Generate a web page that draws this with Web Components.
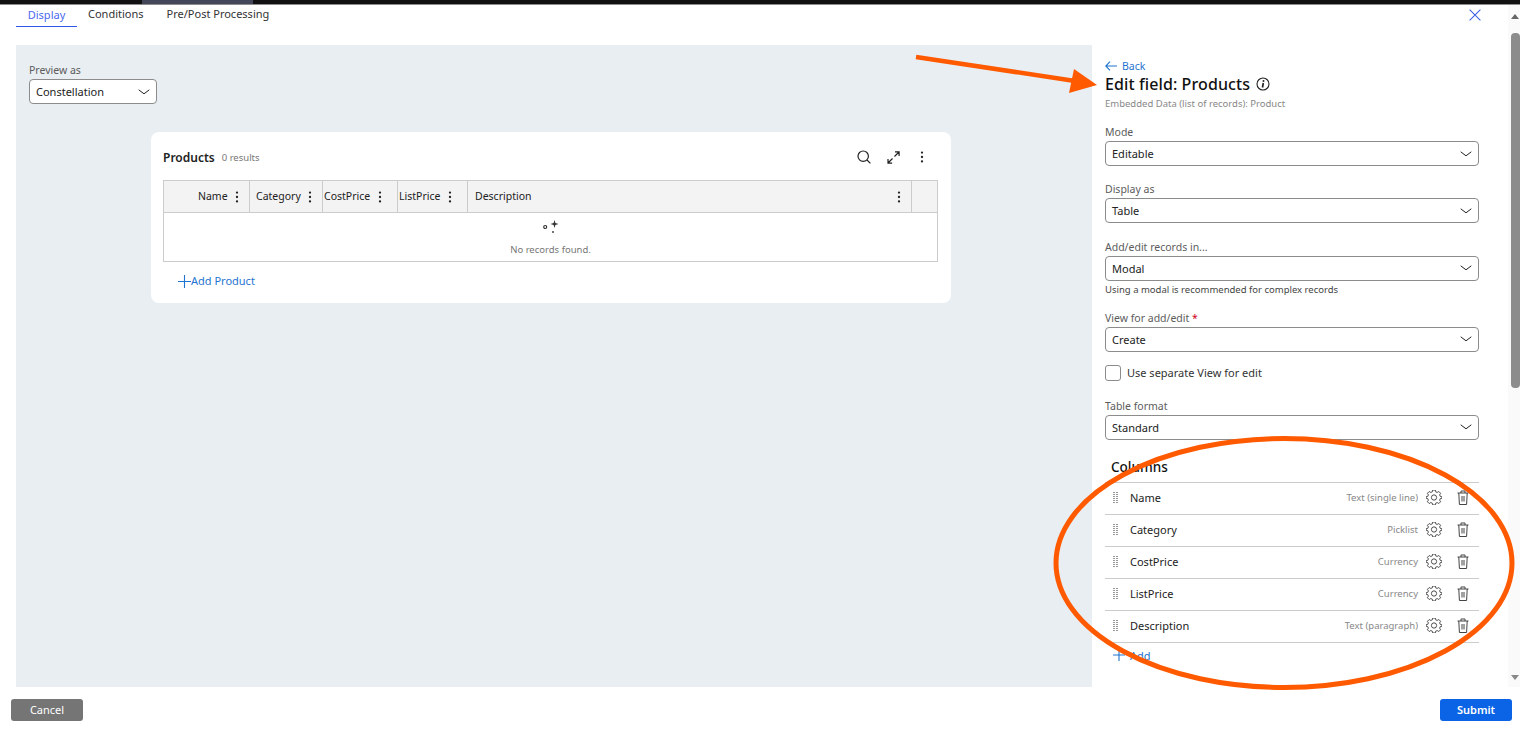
<!DOCTYPE html>
<html>
<head>
<meta charset="utf-8">
<title>Edit field</title>
<style>
    html, body { margin: 0; padding: 0; height: 100%; overflow: hidden; background: #fff; }
    body { font-family: "Noto Sans", "Open Sans", sans-serif; font-size: 11px; color: #222; }
</style>
</head>
<body>
<app-shell>
    <tab-bar slot="tabs"></tab-bar>
    <preview-area slot="preview"></preview-area>
    <field-panel slot="panel"></field-panel>
    <form-footer slot="footer"></form-footer>
    <annotation-layer slot="overlay"></annotation-layer>
</app-shell>

<script>
const DOTS = `<svg width="4" height="12" viewBox="0 0 4 12"><circle cx="2" cy="1.6" r="1.15" fill="#222"/><circle cx="2" cy="6" r="1.15" fill="#222"/><circle cx="2" cy="10.4" r="1.15" fill="#222"/></svg>`;
const CHEVRON = `<svg width="12" height="6" viewBox="0 0 12 6"><path d="M.7.8 6 4.8 11.3.8" fill="none" stroke="#222" stroke-width="1"/></svg>`;

class AppShell extends HTMLElement {
    constructor() {
        super();
        this.attachShadow({ mode: "open" });
    }

    connectedCallback() {
        this.shadowRoot.innerHTML = `
            <style>
                :host { display: flex; flex-direction: column; width: 1520px; height: 731px; position: relative; overflow: hidden; }
                .strip { height: 4px; background: #111; border-bottom: 1px solid #8d8d8d; padding-left: 142px; flex: none; }
                .strip div { width: 111px; height: 4px; background: #44465a; }
                .content { display: flex; height: 642px; padding-left: 16px; flex: none; }
            </style>
            <div class="strip"><div></div></div>
            <slot name="tabs"></slot>
            <div class="content">
                <slot name="preview"></slot>
                <slot name="panel"></slot>
                <scroll-bar></scroll-bar>
            </div>
            <slot name="footer"></slot>
            <slot name="overlay"></slot>
        `;
    }
}

class TabBar extends HTMLElement {
    constructor() {
        super();
        this.attachShadow({ mode: "open" });
    }

    connectedCallback() {
        this.shadowRoot.innerHTML = `
            <style>
                :host { display: flex; height: 40px; padding-left: 16px; flex: none; box-sizing: border-box; position: relative; }
                .tab { height: 22px; line-height: 18px; font-size: 11px; color: #333; margin-right: 23px; }
                .tab.on { width: 61px; box-sizing: border-box; text-align: center; color: #4a69ef; border-bottom: 1px solid #2f55ea; line-height: 20px; margin-right: 11px; }
                .close { position: absolute; left: 1469px; top: 4px; }
            </style>
            <div class="tab on">Display</div>
            <div class="tab">Conditions</div>
            <div class="tab">Pre/Post Processing</div>
            <svg class="close" width="12" height="12" viewBox="0 0 12 12"><path d="M.6.6 11.4 11.4M11.4.6.6 11.4" stroke="#3f62e6" stroke-width="1.1" fill="none"/></svg>
        `;
    }
}

class SelectBox extends HTMLElement {
    constructor() {
        super();
        this.attachShadow({ mode: "open" });
    }

    connectedCallback() {
        this.shadowRoot.innerHTML = `
            <style>
                :host { display: flex; align-items: center; justify-content: space-between; box-sizing: border-box; height: 25px; padding: 0 6px; background: #fff; border: 1px solid #8c8c8c; border-radius: 4px; color: #222; font-size: 11px; }
            </style>
            <span>${this.getAttribute("value")}</span>
            ${CHEVRON}
        `;
    }
}

class PreviewArea extends HTMLElement {
    constructor() {
        super();
        this.attachShadow({ mode: "open" });
    }

    connectedCallback() {
        this.shadowRoot.innerHTML = `
            <style>
                :host { display: block; box-sizing: border-box; width: 1076px; height: 642px; background: #e9eef2; padding: 18px 13px; flex: none; }
                label { display: block; height: 16px; line-height: 15px; color: #5c5c5c; font-size: 10.5px; }
                select-box { width: 128px; }
                products-card { margin: 28px 0 0 122px; }
            </style>
            <label>Preview as</label>
            <select-box value="Constellation"></select-box>
            <products-card></products-card>
        `;
    }
}

class ProductsCard extends HTMLElement {
    constructor() {
        super();
        this.attachShadow({ mode: "open" });
    }

    connectedCallback() {
        this.shadowRoot.innerHTML = `
            <style>
                :host { display: block; box-sizing: border-box; width: 800px; height: 171px; background: #fff; border-radius: 8px; padding: 0 13px 0 12px; }
                .head { display: flex; align-items: center; box-sizing: border-box; height: 48px; padding-top: 2px; }
                .title { font-weight: 600; font-size: 12px; color: #222; }
                .count { font-size: 9.5px; color: #777; margin-left: 7px; }
                .tools { margin-left: auto; display: flex; align-items: center; margin-right: 14px; }
                .tools svg { display: block; }
                .add { display: flex; align-items: center; margin: 11px 0 0 15px; color: #1f74cf; font-size: 11px; line-height: 16px; }
            </style>
            <div class="head">
                <span class="title">Products</span>
                <span class="count">0 results</span>
                <div class="tools">
                    <svg width="14" height="14" viewBox="0 0 14 14" style="margin-right:16px"><circle cx="6.2" cy="6.2" r="5.2" fill="none" stroke="#222" stroke-width="1.2"/><path d="M10 10 13.4 13.4" stroke="#222" stroke-width="1.2"/></svg>
                    <svg width="13" height="13" viewBox="0 0 13 13" style="margin-right:20px"><path d="M7.5 5.5 12 1M8 .9h4.1V5M5.5 7.5 1 12M1 8v4.1h4.1" fill="none" stroke="#222" stroke-width="1.2"/></svg>
                    ${DOTS}
                </div>
            </div>
            <records-table></records-table>
            <div class="add">
                <svg width="13" height="13" viewBox="0 0 13 13"><path d="M6.5 0v13M0 6.5h13" stroke="#1f74cf" stroke-width="1.1"/></svg>
                <span>Add Product</span>
            </div>
        `;
    }
}

class RecordsTable extends HTMLElement {
    constructor() {
        super();
        this.attachShadow({ mode: "open" });
    }

    connectedCallback() {
        this.shadowRoot.innerHTML = `
            <style>
                :host { display: block; box-sizing: border-box; height: 82px; border: 1px solid #ccc; }
                .header { display: flex; height: 32px; box-sizing: border-box; background: #f3f3f3; border-bottom: 1px solid #ccc; font-size: 10.5px; color: #222; }
                .cell { display: flex; align-items: center; box-sizing: border-box; border-right: 1px solid #ccc; flex: none; padding-bottom: 2px; }
                .cell svg { flex: none; margin-top: 2px; }
                .body { display: flex; flex-direction: column; align-items: center; }
                .body svg { margin-top: 6px; }
                .empty { font-size: 9.5px; color: #777; margin-top: 8px; line-height: 13px; }
            </style>
            <div class="header">
                <div class="cell" style="width:86px;padding-left:34px;gap:7px"><span>Name</span>${DOTS}</div>
                <div class="cell" style="width:73px;padding-left:6px;gap:7px"><span>Category</span>${DOTS}</div>
                <div class="cell" style="width:75px;padding-left:1px;gap:8px"><span>CostPrice</span>${DOTS}</div>
                <div class="cell" style="width:70px;padding-left:1px;gap:8px"><span>ListPrice</span>${DOTS}</div>
                <div class="cell" style="width:444px;padding-left:7px;padding-right:10px;justify-content:space-between"><span>Description</span>${DOTS}</div>
            </div>
            <div class="body">
                <svg width="18" height="16" viewBox="0 0 18 16">
                    <circle cx="3.2" cy="8" r="1.5" fill="none" stroke="#333" stroke-width="1.2"/>
                    <path d="M12.5 1 13.4 4.1 16.5 5 13.4 5.9 12.5 9 11.6 5.9 8.5 5 11.6 4.1Z" fill="#333"/>
                    <circle cx="11" cy="13" r=".9" fill="#333"/>
                </svg>
                <div class="empty">No records found.</div>
            </div>
        `;
    }
}

class FormField extends HTMLElement {
    constructor() {
        super();
        this.attachShadow({ mode: "open" });
    }

    connectedCallback() {
        const required = this.hasAttribute("required") ? ` <b>*</b>` : "";
        const hint = this.getAttribute("hint");
        this.shadowRoot.innerHTML = `
            <style>
                :host { display: block; }
                label { display: block; height: 17px; line-height: 16px; color: #5c5c5c; font-size: 10.5px; }
                b { color: #d0021b; font-weight: 400; }
                .hint { font-size: 9.5px; line-height: 15px; color: #444; margin-top: 1px; }
            </style>
            <label>${this.getAttribute("label")}${required}</label>
            <select-box value="${this.getAttribute("value")}"></select-box>
            ${hint ? `<div class="hint">${hint}</div>` : ""}
        `;
    }
}

class ColumnRow extends HTMLElement {
    constructor() {
        super();
        this.attachShadow({ mode: "open" });
    }

    connectedCallback() {
        this.shadowRoot.innerHTML = `
            <style>
                :host { display: flex; align-items: center; box-sizing: border-box; height: 32px; border-bottom: 1px solid #ccc; padding: 0 10px 2px 8px; font-size: 11px; color: #222; }
                .grip { flex: none; margin-right: 12px; }
                .type { margin-left: auto; color: #888; font-size: 9.5px; margin-right: 8px; }
                .gear { flex: none; margin-right: 15px; }
                .bin { flex: none; }
            </style>
            <svg class="grip" width="5" height="11" viewBox="0 0 5 11" shape-rendering="crispEdges">
                <path d="M0 .5h5M0 2.5h5M0 4.5h5M0 6.5h5M0 8.5h5M0 10.5h5" stroke="#999" stroke-width="1" stroke-dasharray="2 1"/>
            </svg>
            <span>${this.getAttribute("name")}</span>
            <span class="type">${this.getAttribute("type")}</span>
            <svg class="gear" width="16" height="15" viewBox="0 0 24 24" fill="none" stroke="#444" stroke-width="1.5">
                <circle cx="12" cy="12" r="4.2"/>
                <path d="M10 1.5h4l.7 2.9 2.4 1 2.6-1.5 2.8 2.8-1.5 2.6 1 2.4 2.9.7v2.2l-2.900.7-1 2.400 1.500 2.600-2.800 2.800-2.600-1.500-2.400 1-.7 2.900h-4l-.7-2.900-2.400-1-2.600 1.500-2.800-2.800 1.500-2.600-1-2.400-2.900-.7v-2.200l2.900-.7 1-2.400-1.500-2.600 2.800-2.800 2.600 1.500 2.400-1z" transform="translate(0 -1.5)"/>
            </svg>
            <svg class="bin" width="12" height="15" viewBox="0 0 12 15" fill="none" stroke="#444" stroke-width="1">
                <path d="M.5 3h11M4 3V1h4v2M1.8 3l.6 11.5h7.200L10.200 3"/>
                <path d="M5 6v5.500M7 6v5.500"/>
            </svg>
        `;
    }
}

class FieldPanel extends HTMLElement {
    constructor() {
        super();
        this.attachShadow({ mode: "open" });
    }

    connectedCallback() {
        this.shadowRoot.innerHTML = `
            <style>
                :host { display: block; box-sizing: border-box; width: 416px; height: 642px; padding: 13px 29px 0 13px; overflow: hidden; flex: none; background: #fff; }
                .back { display: flex; align-items: center; gap: 5px; color: #1f74cf; font-size: 10.5px; height: 16px; }
                h2 { margin: -1px 0 1px; display: flex; align-items: center; gap: 6px; height: 21px; font-size: 16px; font-weight: 500; letter-spacing: .1px; color: #111; }
                .sub { font-size: 9.5px; color: #888; height: 16px; line-height: 17px; margin-bottom: 13px; }
                form-field { margin-bottom: 15.3px; }
                form-field.hinted { margin-bottom: 13.4px; }
                .check { display: flex; align-items: center; gap: 6px; height: 16px; font-size: 11px; margin: -2.3px 0 17px; color: #333; }
                .box { width: 16px; height: 16px; box-sizing: border-box; border: 1px solid #8c8c8c; border-radius: 3px; background: #fff; }
                h3 { margin: 0; padding-left: 6px; height: 26.7px; line-height: 24px; font-size: 13.5px; font-weight: 500; color: #111; border-bottom: 1px solid #ccc; }
                .add { display: flex; align-items: center; gap: 5px; padding-left: 8px; margin-top: 5px; color: #1f74cf; font-size: 11px; }
            </style>
            <div class="back">
                <svg width="12" height="10" viewBox="0 0 12 10"><path d="M5 .7.8 5 5 9.3M.8 5H12" fill="none" stroke="#1f74cf" stroke-width="1.1"/></svg>
                <span>Back</span>
            </div>
            <h2>Edit field: Products
                <svg width="14" height="14" viewBox="0 0 14 14"><circle cx="7" cy="7" r="6" fill="none" stroke="#222" stroke-width="1.1"/><circle cx="7.5" cy="4" r="1" fill="#222"/><path d="M7.3 6 6.5 10.5" stroke="#222" stroke-width="1.7"/></svg>
            </h2>
            <div class="sub">Embedded Data (list of records): Product</div>
            <form-field label="Mode" value="Editable"></form-field>
            <form-field label="Display as" value="Table"></form-field>
            <form-field class="hinted" label="Add/edit records in..." value="Modal" hint="Using a modal is recommended for complex records"></form-field>
            <form-field label="View for add/edit" value="Create" required></form-field>
            <div class="check"><span class="box"></span><span>Use separate View for edit</span></div>
            <form-field label="Table format" value="Standard"></form-field>
            <h3>Columns</h3>
            <column-row name="Name" type="Text (single line)"></column-row>
            <column-row name="Category" type="Picklist"></column-row>
            <column-row name="CostPrice" type="Currency"></column-row>
            <column-row name="ListPrice" type="Currency"></column-row>
            <column-row name="Description" type="Text (paragraph)"></column-row>
            <div class="add">
                <svg width="12" height="12" viewBox="0 0 12 12"><path d="M6 0v12M0 6h12" stroke="#1f74cf" stroke-width="1.1"/></svg>
                <span>Add</span>
            </div>
        `;
    }
}

class ScrollBar extends HTMLElement {
    constructor() {
        super();
        this.attachShadow({ mode: "open" });
    }

    connectedCallback() {
        this.shadowRoot.innerHTML = `
            <style>
                :host { display: block; width: 12px; height: 682px; margin-top: -40px; background: #fafafa; position: relative; flex: none; }
                .up, .down { position: absolute; left: 3px; width: 0; height: 0; border-left: 4px solid transparent; border-right: 4px solid transparent; }
                .up { top: 9px; border-bottom: 5px solid #666; }
                .down { bottom: 7px; border-top: 5px solid #888; }
                .thumb { position: absolute; left: 3px; top: 28px; width: 9px; height: 355px; background: #8c8c8c; border-radius: 4px; }
            </style>
            <div class="up"></div>
            <div class="thumb"></div>
            <div class="down"></div>
        `;
    }
}

class FormFooter extends HTMLElement {
    constructor() {
        super();
        this.attachShadow({ mode: "open" });
    }

    connectedCallback() {
        this.shadowRoot.innerHTML = `
            <style>
                :host { display: flex; justify-content: space-between; align-items: flex-start; padding: 12px 8px 0 11px; background: #fff; flex: none; }
                button { font: inherit; font-size: 11px; height: 22px; border: 0; border-radius: 3px; color: #fff; padding: 0 0 2px; }
                .cancel { width: 72px; background: #757575; }
                .submit { width: 72px; background: #0b63e5; font-weight: 600; }
            </style>
            <button class="cancel">Cancel</button>
            <button class="submit">Submit</button>
        `;
    }
}

class AnnotationLayer extends HTMLElement {
    constructor() {
        super();
        this.attachShadow({ mode: "open" });
    }

    connectedCallback() {
        this.shadowRoot.innerHTML = `
            <style>
                :host { position: absolute; left: 0; top: 0; width: 1520px; height: 731px; pointer-events: none; }
                svg { display: block; }
            </style>
            <svg width="1520" height="731" viewBox="0 0 1520 731">
                <path d="M916 57 1075 81" stroke="#ff5a00" stroke-width="4.5" fill="none"/>
                <path d="M1074 69 1097 85 1069 93Z" fill="#ff5a00"/>
                <ellipse cx="1284" cy="563" rx="228" ry="124.5" fill="none" stroke="#ff5a00" stroke-width="5"/>
            </svg>
        `;
    }
}

customElements.define("app-shell", AppShell);
customElements.define("tab-bar", TabBar);
customElements.define("select-box", SelectBox);
customElements.define("preview-area", PreviewArea);
customElements.define("products-card", ProductsCard);
customElements.define("records-table", RecordsTable);
customElements.define("form-field", FormField);
customElements.define("column-row", ColumnRow);
customElements.define("field-panel", FieldPanel);
customElements.define("scroll-bar", ScrollBar);
customElements.define("form-footer", FormFooter);
customElements.define("annotation-layer", AnnotationLayer);
</script>
</body>
</html>
